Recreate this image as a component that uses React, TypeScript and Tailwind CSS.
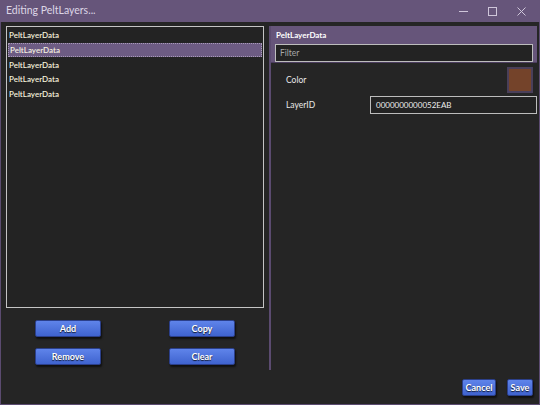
import React from 'react';

const items = ['PeltLayerData', 'PeltLayerData', 'PeltLayerData', 'PeltLayerData', 'PeltLayerData'];

const font = { fontFamily: 'Lato, "Open Sans", sans-serif' };

function BlueButton({ label, className = '' }: { label: string; className?: string }) {
  return (
    <button
      className={`h-[17px] rounded-[2px] border border-[#2b3f8a] bg-gradient-to-b from-[#5f84ea] to-[#3f63cf] text-[9px] font-bold text-white shadow-[1px_2px_2px_rgba(0,0,0,0.6)] [text-shadow:0_1px_1px_rgba(0,0,0,0.8)] ${className}`}
    >
      {label}
    </button>
  );
}

export default function App() {
  return (
    <div
      className="w-[540px] h-[405px] flex flex-col bg-[#252525] border-x border-b border-[#5b4b70]"
      style={font}
    >
      {/* Title bar */}
      <div className="h-[22px] -mx-px bg-[#66557a] flex items-center justify-between pl-[6px] pr-[14px]">
        <span className="text-[10.5px] text-[#ddd6e6]">Editing PeltLayers...</span>
        <div className="flex items-center gap-[20px] text-[#cfc6da]">
          <svg width="9" height="9" viewBox="0 0 9 9">
            <path d="M0 4.5h9" stroke="currentColor" strokeWidth="1" />
          </svg>
          <svg width="9" height="9" viewBox="0 0 9 9">
            <rect x="0.5" y="0.5" width="8" height="8" fill="none" stroke="currentColor" strokeWidth="1" />
          </svg>
          <svg width="9" height="9" viewBox="0 0 9 9">
            <path d="M0.5 0.5l8 8M8.5 0.5l-8 8" stroke="currentColor" strokeWidth="1" />
          </svg>
        </div>
      </div>

      {/* Main */}
      <div className="flex h-[348px]">
        <div className="w-[268px] flex flex-col pt-[4px] pl-[5px]">
          <div className="w-[258px] h-[282px] border border-[#c4c4c4] bg-[#232323] pt-[1px] px-[1px]">
            {items.map((it, i) => (
              <div
                key={i}
                className={`h-[14.7px] flex items-center pl-[1px] text-[8px] font-semibold leading-none ${
                  i === 1
                    ? 'bg-[#6d5c83] border border-dotted border-[#a89bb8] text-[#f3efe0]'
                    : 'text-[#f5f0dc]'
                }`}
              >
                {it}
              </div>
            ))}
          </div>
          <div className="grid grid-cols-2 justify-items-center gap-y-[11px] mt-[12px] -ml-[5px]">
            <BlueButton label="Add" className="w-[66px]" />
            <BlueButton label="Copy" className="w-[66px]" />
            <BlueButton label="Remove" className="w-[66px]" />
            <BlueButton label="Clear" className="w-[66px]" />
          </div>
        </div>

        <div className="w-[2px] bg-[#5b4b70] mt-[4px]" />

        <div className="flex-1 pt-[4px] pr-[2px]">
          <div className="h-[37px] bg-[#66557a] px-[4px] pt-[3px] border-b border-[#4b3d5e]">
            <div className="text-[8px] font-bold text-white leading-[12px] pl-[1px]">PeltLayerData</div>
            <div className="mt-[3px] h-[18px] w-[258px] border border-[#bdbdbd] bg-[#232323] flex items-center pl-[4px] text-[8.5px] text-[#a8a8a8]">
              Filter
            </div>
          </div>
          <div className="flex items-center justify-between h-[28px] mt-[3px] pl-[15px] pr-[4px]">
            <span className="text-[8.5px] text-[#e8e8e8]">Color</span>
            <div className="w-[26px] h-[26px] border-2 border-[#4a3f59] bg-[#74432a]" />
          </div>
          <div className="flex items-center h-[18px] mt-[2px] pl-[15px]">
            <span className="w-[84px] text-[8.5px] text-[#e8e8e8]">LayerID</span>
            <div className="flex-1 h-[18px] border border-[#bdbdbd] bg-[#232323] flex items-center pl-[5px] text-[8px] text-[#ececec]">
              0000000000052EAB
            </div>
          </div>
        </div>
      </div>

      {/* Footer */}
      <div className="flex justify-end gap-[11px] pr-[6px] mt-[9px]">
        <BlueButton label="Cancel" className="w-[34px]" />
        <BlueButton label="Save" className="w-[26px]" />
      </div>
    </div>
  );
}
